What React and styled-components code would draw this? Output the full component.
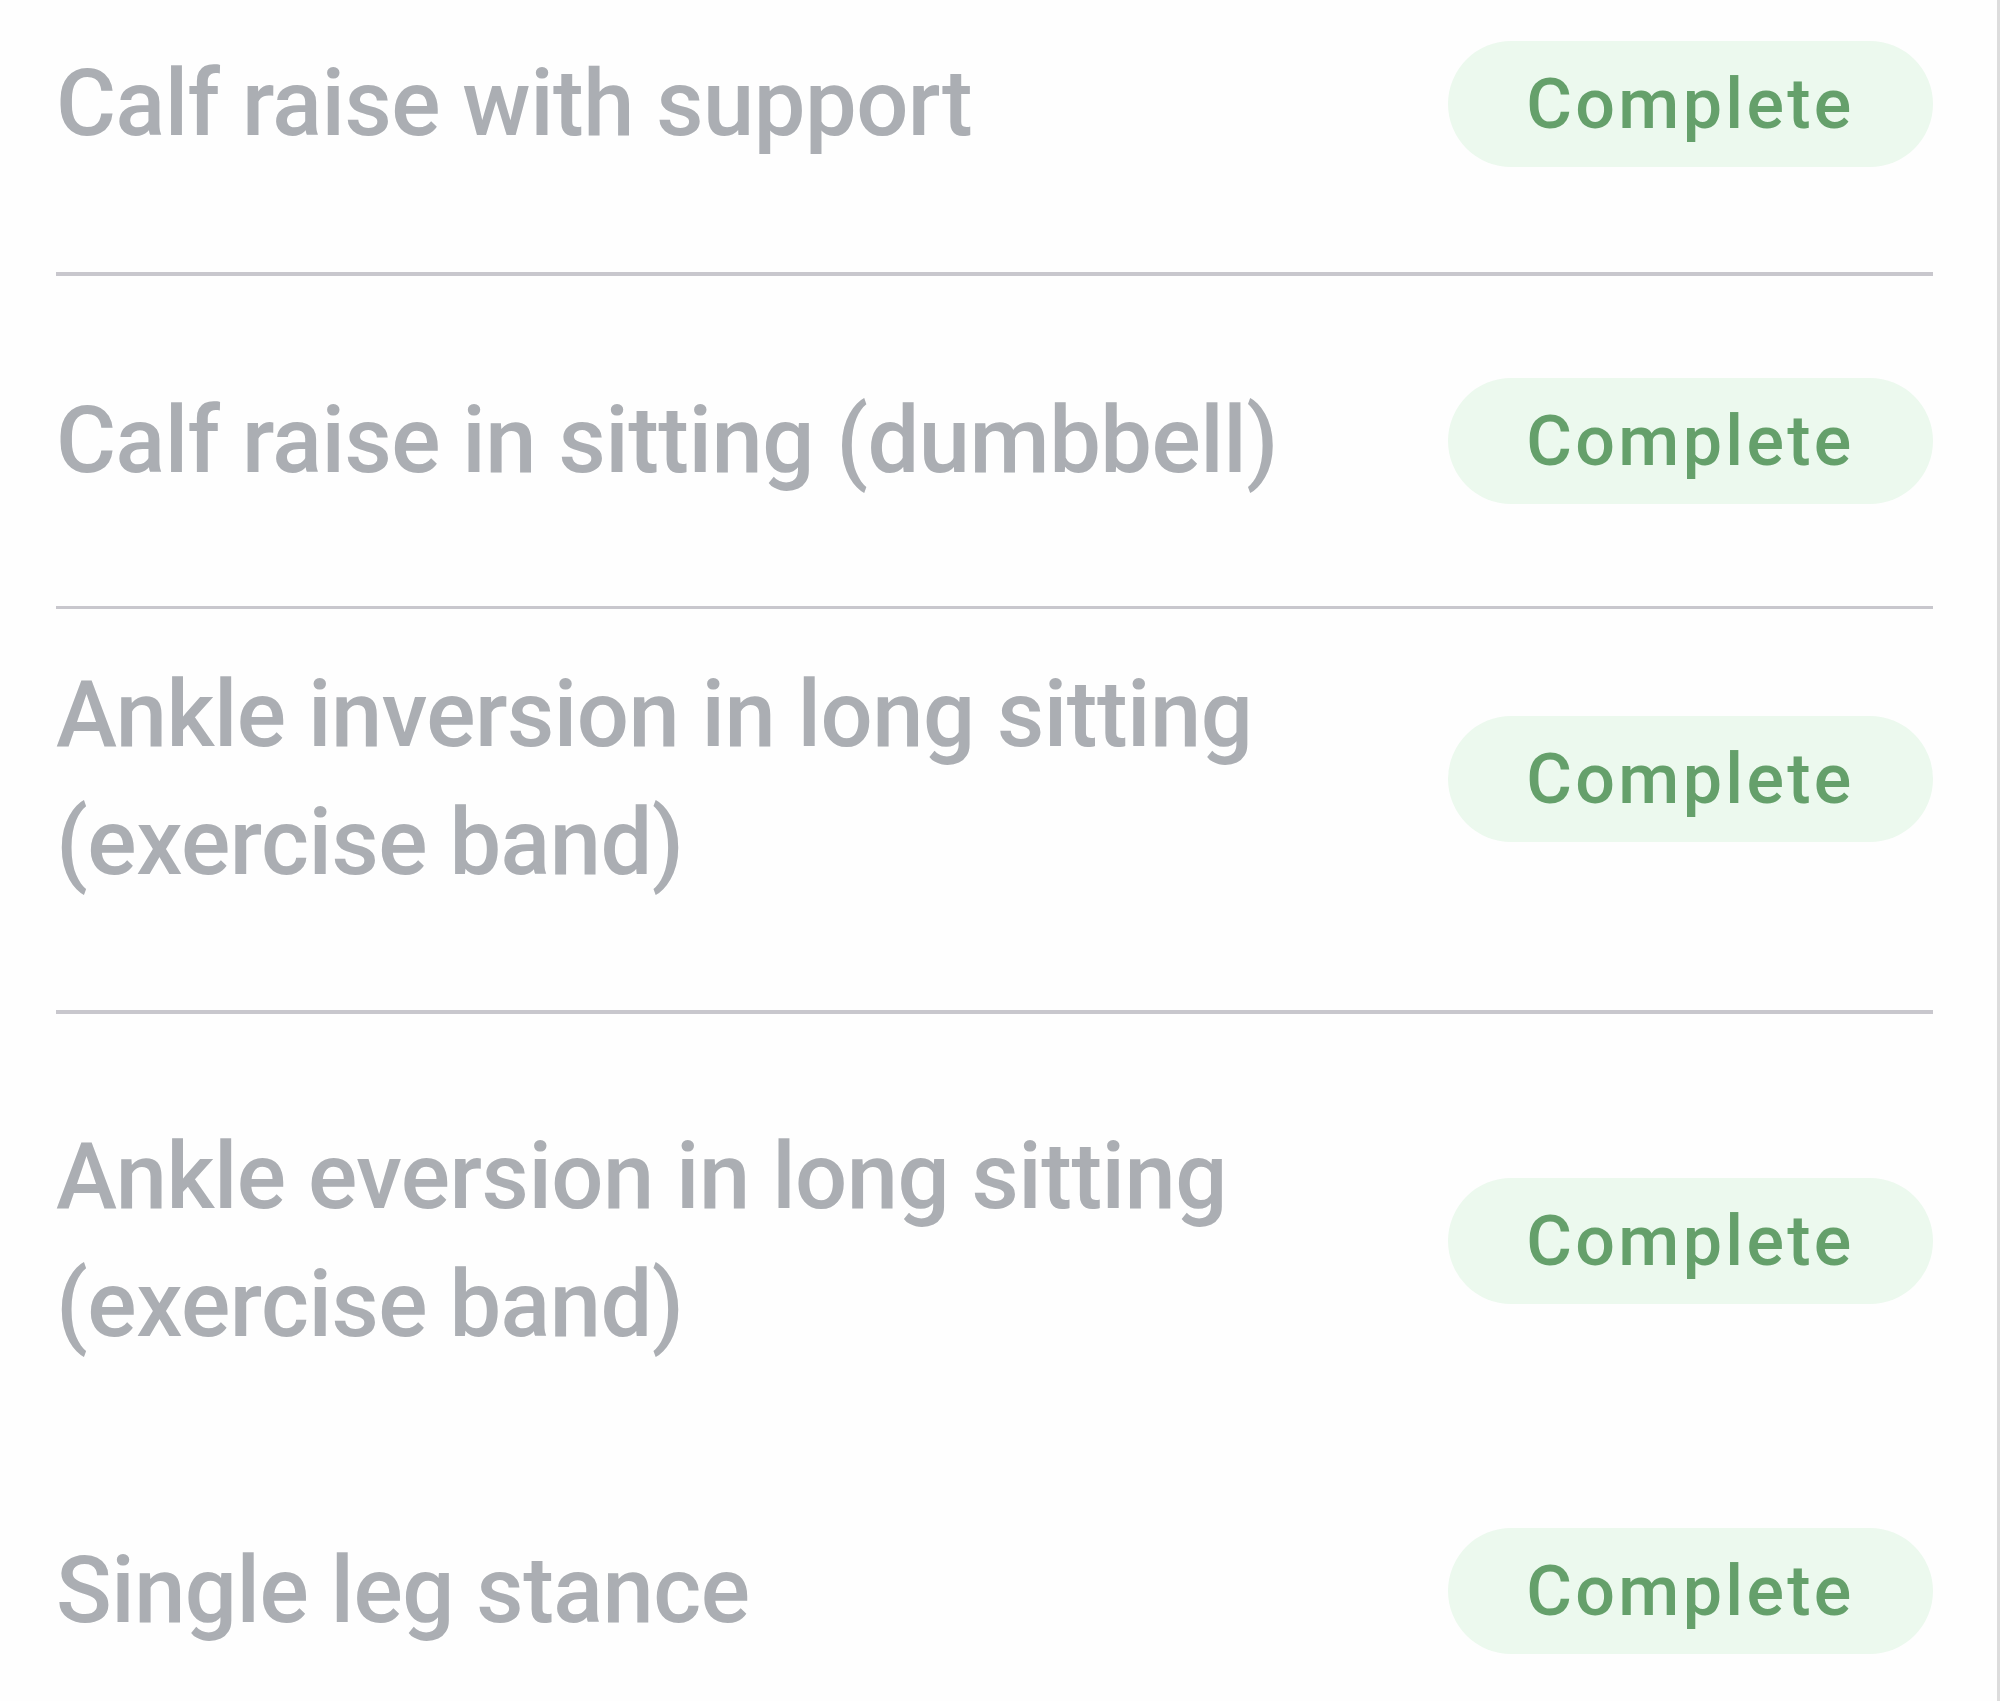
import React from 'react';
import styled, { createGlobalStyle } from 'styled-components';

const GlobalStyle = createGlobalStyle`
  html, body {
    margin: 0;
    padding: 0;
    background: #ffffff;
  }
`;

const Page = styled.main`
  box-sizing: border-box;
  width: 2000px;
  height: 1701px;
  overflow: hidden;
  background: #fefefe;
  padding: 0 64px 0 56px;
  border-right: 3px solid #dcdcdc;
  font-family: Roboto, "Noto Sans", sans-serif;
`;

const List = styled.ul`
  list-style: none;
  margin: 0;
  padding: 0;
`;

const Row = styled.li`
  display: flex;
  align-items: center;
  justify-content: space-between;
  padding: ${(p) => p.$top}px 0 ${(p) => p.$bottom}px 0;
`;

const Title = styled.span`
  font-size: 92px;
  font-weight: 500;
  line-height: 128px;
  letter-spacing: -0.5px;
  color: #abaeb3;
  max-width: 1300px;
`;

const Pill = styled.span`
  flex: none;
  box-sizing: border-box;
  width: 485px;
  height: 126px;
  border-radius: 63px;
  background: #ecf9ee;
  color: #65a06b;
  font-size: 70px;
  font-weight: 500;
  letter-spacing: 3.3px;
  display: flex;
  align-items: center;
  justify-content: center;
`;

const Divider = styled.li`
  height: ${(p) => p.$size}px;
  background: #c8c7cd;
`;

const items = [
  { title: 'Calf raise with support', top: 40, bottom: 104, line: 4 },
  { title: 'Calf raise in sitting (dumbbell)', top: 101, bottom: 101, line: 3 },
  { title: ['Ankle inversion in long sitting', '(exercise band)'], top: 42, bottom: 103, line: 4 },
  { title: ['Ankle eversion in long sitting', '(exercise band)'], top: 99, bottom: 158, line: 0 },
  { title: 'Single leg stance', top: 0, bottom: 0, line: 0 },
];

export default function App() {
  return (
    <>
      <GlobalStyle />
      <Page>
        <List>
          {items.map((item, i) => (
            <React.Fragment key={i}>
              <Row $top={item.top} $bottom={item.bottom}>
                <Title>
                  {Array.isArray(item.title)
                    ? item.title.map((t, j) => (
                        <React.Fragment key={j}>
                          {j > 0 && <br />}
                          {t}
                        </React.Fragment>
                      ))
                    : item.title}
                </Title>
                <Pill>Complete</Pill>
              </Row>
              {item.line > 0 && <Divider $size={item.line} />}
            </React.Fragment>
          ))}
        </List>
      </Page>
    </>
  );
}
